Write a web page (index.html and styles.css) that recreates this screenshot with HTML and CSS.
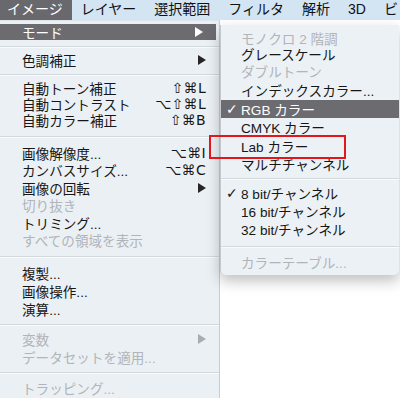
FILE: index.html
```html
<!DOCTYPE html>
<html>
<head>
    <meta charset="utf-8">
    <title>イメージ メニュー</title>
    <link rel="stylesheet" href="styles.css">
</head>
<body>
    <div class="menubar">
        <span class="title active">イメージ</span>
        <span class="title">レイヤー</span>
        <span class="title">選択範囲</span>
        <span class="title">フィルタ</span>
        <span class="title">解析</span>
        <span class="title">3D</span>
        <span class="title">ビ</span>
    </div>

    <div class="screen">
        <div class="menu">
            <div class="row h16 selected"><span class="label">モード</span><i class="arrow"></i></div>
            <div class="sep s1"></div>
            <div class="row h16"><span class="label">色調補正</span><i class="arrow"></i></div>
            <div class="sep s1"></div>
            <div class="row h16"><span class="label">自動トーン補正</span><span class="key">⇧⌘L</span></div>
            <div class="row h16"><span class="label">自動コントラスト</span><span class="key">⌥⇧⌘L</span></div>
            <div class="row h16"><span class="label">自動カラー補正</span><span class="key">⇧⌘B</span></div>
            <div class="sep s2"></div>
            <div class="row h17"><span class="label">画像解像度...</span><span class="key">⌥⌘I</span></div>
            <div class="row h17"><span class="label">カンバスサイズ...</span><span class="key">⌥⌘C</span></div>
            <div class="row h17"><span class="label">画像の回転</span><i class="arrow"></i></div>
            <div class="row h17 off"><span class="label">切り抜き</span></div>
            <div class="row h17"><span class="label">トリミング...</span></div>
            <div class="row h17 off"><span class="label">すべての領域を表示</span></div>
            <div class="sep s3"></div>
            <div class="row h18"><span class="label">複製...</span></div>
            <div class="row h18"><span class="label">画像操作...</span></div>
            <div class="row h18"><span class="label">演算...</span></div>
            <div class="sep s1"></div>
            <div class="row h18 off"><span class="label">変数</span><i class="arrow"></i></div>
            <div class="row h18 off"><span class="label">データセットを適用...</span></div>
            <div class="sep s4"></div>
            <div class="row h18 off"><span class="label">トラッピング...</span></div>
        </div>

        <div class="submenu">
            <div class="row sub h17s off"><span class="label">モノクロ 2 階調</span></div>
            <div class="row sub h16"><span class="label">グレースケール</span></div>
            <div class="row sub h17s off"><span class="label">ダブルトーン</span></div>
            <div class="row sub h21"><span class="label">インデックスカラー...</span></div>
            <div class="row sub h18 selected"><span class="check">✓</span><span class="label">RGB カラー</span></div>
            <div class="row sub h18"><span class="label">CMYK カラー</span></div>
            <div class="row sub h19"><span class="label">Lab カラー</span></div>
            <div class="row sub h17s"><span class="label">マルチチャンネル</span></div>
            <div class="sep s1"></div>
            <div class="row sub h18"><span class="check">✓</span><span class="label">8 bit/チャンネル</span></div>
            <div class="row sub h18"><span class="label">16 bit/チャンネル</span></div>
            <div class="row sub h18"><span class="label">32 bit/チャンネル</span></div>
            <div class="sep s2"></div>
            <div class="row sub h16 off"><span class="label">カラーテーブル...</span></div>
        </div>

        <div class="mark"></div>
    </div>
</body>
</html>
```

FILE: styles.css
```css
* {
    margin: 0;
    padding: 0;
    box-sizing: border-box;
}
body {
    font-family: "Liberation Sans", "Noto Sans CJK JP", sans-serif;
    font-size: 13.6px;
    background: white;
    color: #161616;
    width: 400px;
    height: 398px;
    overflow: hidden;
}

/* top bar */
.menubar {
    display: flex;
    height: 20px;
    background: #d3e4f3;
    font-size: 14px;
    line-height: 19px;
    white-space: nowrap;
}
.title {
    padding: 0 9px 0 9px;
    color: #111;
}
.title.active {
    padding-left: 7px;
    background: #69686d;
    color: white;
}

.screen {
    position: relative;
    height: 378px;
}

/* main menu */
.menu {
    width: 220px;
    height: 100%;
    padding-top: 3px;
    background: #ebf0f4;
    border-right: 1px solid #c9cdd1;
    border-top: 1px solid #dfe5ea;
}
.row {
    display: flex;
    align-items: center;
    padding: 0 13px 0 22px;
    white-space: nowrap;
}
.row .label {
    flex: 1;
}
.h16 { height: 16px; }
.h17s { height: 17px; }
.h17 { height: 17.5px; }
.h18 { height: 18px; }
.h19 { height: 19px; }
.h21 { height: 21px; }

.row.off {
    color: #b1b4b8;
}
.row.selected {
    background: #6c6b70;
    color: white;
}
.menu .row.selected {
    margin-right: 3px;
}
.key {
    font-family: "DejaVu Sans", "Liberation Sans", sans-serif;
    font-size: 14px;
    letter-spacing: 0.3px;
}
.arrow {
    width: 0;
    height: 0;
    border-left: 8px solid #262626;
    border-top: 5px solid transparent;
    border-bottom: 5px solid transparent;
}
.selected .arrow {
    border-left-color: white;
}
.off .arrow {
    border-left-color: #a9acb0;
}

/* separators */
.sep {
    height: 1px;
    background: #d4d9dd;
    box-shadow: 0 1px 0 #f8fafc;
}
.s1 { margin: 6px 0 5px; }
.s2 { margin: 8px 0 7px; }
.s3 { margin: 7px 0 7px; }
.s4 { margin: 6px 0 6px; }

/* sub menu (pops over the main menu) */
.submenu {
    position: absolute;
    left: 220px;
    top: 5px;
    width: 179px;
    padding: 4px 0 5px;
    background: #ecf1f5;
    border-left: 1px solid #c4c9ce;
    border-radius: 0 0 5px 5px;
    box-shadow: 0 6px 14px rgba(0, 0, 0, 0.25);
}
.row.sub {
    padding-left: 20px;
    position: relative;
}
.check {
    position: absolute;
    left: 5px;
    font-family: "DejaVu Sans", sans-serif;
    font-size: 14px;
    font-weight: bold;
}

/* annotation */
.mark {
    position: absolute;
    left: 209px;
    top: 115px;
    width: 137px;
    height: 24px;
    border: 2px solid #e3161d;
}
```
